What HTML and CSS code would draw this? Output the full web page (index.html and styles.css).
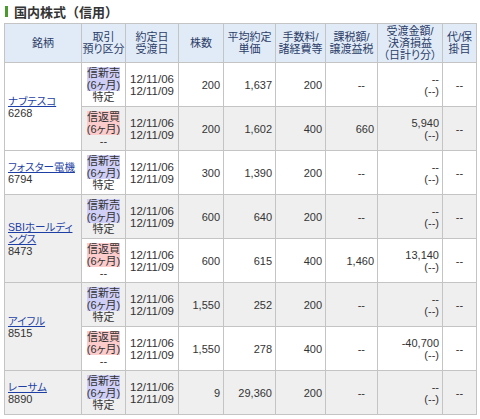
FILE: index.html
```html
<!DOCTYPE html>
<html>
<head>
	<meta charset="utf-8">
	<title>国内株式（信用）</title>
	<link rel="stylesheet" href="styles.css">
</head>
<body>
	<div class="wrap">
		<h2 class="ttl">国内株式（信用）</h2>
		<table class="list">
			<colgroup>
				<col class="c-name">
				<col class="c-kind">
				<col class="c-date">
				<col class="c-qty">
				<col class="c-price">
				<col class="c-fee">
				<col class="c-tax">
				<col class="c-amt">
				<col class="c-rate">
			</colgroup>
			<thead>
				<tr>
					<th>銘柄</th>
					<th>取引<br>預り区分</th>
					<th>約定日<br>受渡日</th>
					<th>株数</th>
					<th>平均約定<br>単価</th>
					<th>手数料/<br>諸経費等</th>
					<th>課税額/<br>譲渡益税</th>
					<th>受渡金額/<br>決済損益<br>（日計り分）</th>
					<th>代/保<br>掛目</th>
				</tr>
			</thead>
			<tbody>
				<!-- ナブテスコ -->
				<tr>
					<td class="name" rowspan="2"><a href="#">ナブテスコ</a><br>6268</td>
					<td class="kind"><span class="sell">信新売</span><br><span class="sell">(6ヶ月)</span><br>特定</td>
					<td class="date">12/11/06<br>12/11/09</td>
					<td class="num">200</td>
					<td class="num">1,637</td>
					<td class="num">200</td>
					<td class="num"><span class="nil">--</span></td>
					<td class="num">--<br>(--)</td>
					<td class="rate">--</td>
				</tr>
				<tr class="gray">
					<td class="kind"><span class="buy">信返買</span><br><span class="buy">(6ヶ月)</span><br>--</td>
					<td class="date">12/11/06<br>12/11/09</td>
					<td class="num">200</td>
					<td class="num">1,602</td>
					<td class="num">400</td>
					<td class="num">660</td>
					<td class="num">5,940<br>(--)</td>
					<td class="rate">--</td>
				</tr>

				<!-- フォスター電機 -->
				<tr>
					<td class="name"><a href="#">フォスター電機</a><br>6794</td>
					<td class="kind"><span class="sell">信新売</span><br><span class="sell">(6ヶ月)</span><br>特定</td>
					<td class="date">12/11/06<br>12/11/09</td>
					<td class="num">300</td>
					<td class="num">1,390</td>
					<td class="num">200</td>
					<td class="num"><span class="nil">--</span></td>
					<td class="num">--<br>(--)</td>
					<td class="rate">--</td>
				</tr>

				<!-- SBIホールディングス -->
				<tr class="gray">
					<td class="name" rowspan="2"><a href="#">SBIホールディ<br>ングス</a><br>8473</td>
					<td class="kind"><span class="sell">信新売</span><br><span class="sell">(6ヶ月)</span><br>特定</td>
					<td class="date">12/11/06<br>12/11/09</td>
					<td class="num">600</td>
					<td class="num">640</td>
					<td class="num">200</td>
					<td class="num"><span class="nil">--</span></td>
					<td class="num">--<br>(--)</td>
					<td class="rate">--</td>
				</tr>
				<tr>
					<td class="kind"><span class="buy">信返買</span><br><span class="buy">(6ヶ月)</span><br>--</td>
					<td class="date">12/11/06<br>12/11/09</td>
					<td class="num">600</td>
					<td class="num">615</td>
					<td class="num">400</td>
					<td class="num">1,460</td>
					<td class="num">13,140<br>(--)</td>
					<td class="rate">--</td>
				</tr>

				<!-- アイフル -->
				<tr class="gray">
					<td class="name" rowspan="2"><a href="#">アイフル</a><br>8515</td>
					<td class="kind"><span class="sell">信新売</span><br><span class="sell">(6ヶ月)</span><br>特定</td>
					<td class="date">12/11/06<br>12/11/09</td>
					<td class="num">1,550</td>
					<td class="num">252</td>
					<td class="num">200</td>
					<td class="num"><span class="nil">--</span></td>
					<td class="num">--<br>(--)</td>
					<td class="rate">--</td>
				</tr>
				<tr>
					<td class="kind"><span class="buy">信返買</span><br><span class="buy">(6ヶ月)</span><br>--</td>
					<td class="date">12/11/06<br>12/11/09</td>
					<td class="num">1,550</td>
					<td class="num">278</td>
					<td class="num">400</td>
					<td class="num"><span class="nil">--</span></td>
					<td class="num">-40,700<br>(--)</td>
					<td class="rate">--</td>
				</tr>

				<!-- レーサム -->
				<tr class="gray">
					<td class="name"><a href="#">レーサム</a><br>8890</td>
					<td class="kind"><span class="sell">信新売</span><br><span class="sell">(6ヶ月)</span><br>特定</td>
					<td class="date">12/11/06<br>12/11/09</td>
					<td class="num">9</td>
					<td class="num">29,360</td>
					<td class="num">200</td>
					<td class="num"><span class="nil">--</span></td>
					<td class="num">--<br>(--)</td>
					<td class="rate">--</td>
				</tr>
			</tbody>
		</table>
	</div>
</body>
</html>
```

FILE: styles.css
```css
*{
	margin: 0;
	padding: 0;
}
body{
	font-family: "Liberation Sans", "Noto Sans CJK JP", sans-serif;
	font-size: 11px;
	color: #333;
	background: #fff;
}
.wrap{
	padding: 0 4px;
}

/* 見出し */
.ttl{
	display: flex;
	align-items: center;
	height: 23px;
	padding-left: 1px;
	font-size: 13px;
	font-weight: bold;
	color: #333;
}
.ttl::before{
	content: "";
	width: 3px;
	height: 11px;
	margin-right: 6px;
	background: #4a9a2c;
}

/* 一覧 */
.list{
	width: 473px;
	border-collapse: collapse;
	table-layout: fixed;
	font-feature-settings: "palt";
}
.c-name{ width: 77px; }
.c-kind{ width: 44px; }
.c-date{ width: 53px; }
.c-qty{ width: 45px; }
.c-price{ width: 52px; }
.c-fee{ width: 50px; }
.c-tax{ width: 52px; }
.c-amt{ width: 65px; }
.c-rate{ width: 34px; }

.list th,
.list td{
	border: 1px solid #c4c4c4;
	vertical-align: middle;
}
.list th{
	height: 38px;
	background: #e1ebf7;
	color: #2c3d68;
	font-weight: normal;
	line-height: 12px;
	text-align: center;
}
.list tbody tr{
	height: 44px;
}
.list tr.gray td{
	background: #efefef;
}
.list td{
	line-height: 12px;
	padding: 0 3px;
}
.name{
	text-align: left;
}
.name a{
	font-size: 10.5px;
	color: #1d3fa5;
}
.kind{
	line-height: 13px;
	text-align: center;
}
.sell,
.buy{
	display: inline-block;
	height: 12px;
	line-height: 12px;
}
.sell{
	background: #cfcff8;
}
.buy{
	background: #fccccc;
}
.date{
	font-size: 11.5px;
	line-height: 14px;
	padding: 0 1px;
	text-align: center;
}
.num{
	text-align: right;
}
.nil{
	margin-right: 9px;
}
.rate{
	text-align: center;
}
```
